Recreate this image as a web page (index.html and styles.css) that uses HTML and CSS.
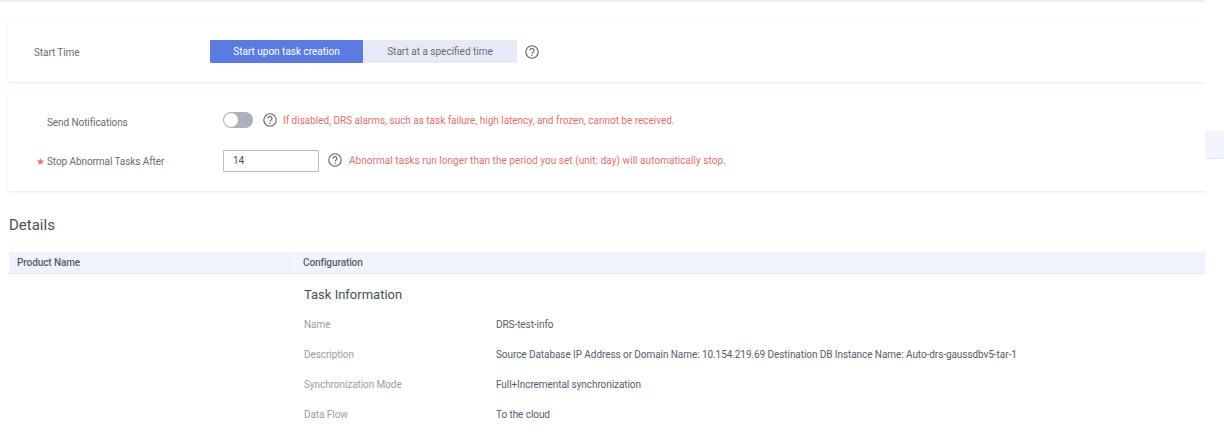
FILE: index.html
```html
<!DOCTYPE html>
<html lang="en">
<head>
<meta charset="utf-8">
<title>Confirm Task</title>
<link rel="stylesheet" href="styles.css">
</head>
<body>
<div class="page">
  <main class="main">
    <section class="card card-time">
      <div class="label label-time">Start Time</div>
      <div class="seg">
        <button class="seg-btn seg-on">Start upon task creation</button>
        <button class="seg-btn seg-off">Start at a specified time</button>
      </div>
      <svg class="help help-time" viewBox="0 0 14 14"><use href="#q"/></svg>
    </section>
    <section class="card card-notify">
      <div class="row row-send">
        <div class="label label-send">Send Notifications</div>
        <span class="switch"><span class="knob"></span></span>
        <svg class="help" viewBox="0 0 14 14"><use href="#q"/></svg>
        <span class="warn">If disabled, DRS alarms, such as task failure, high latency, and frozen, cannot be received.</span>
      </div>
      <div class="row row-stop">
        <div class="label label-stop"><span class="star">★</span>Stop Abnormal Tasks After</div>
        <div class="input">14</div>
        <svg class="help" viewBox="0 0 14 14"><use href="#q"/></svg>
        <span class="warn">Abnormal tasks run longer than the period you set (unit: day) will automatically stop.</span>
      </div>
    </section>
    <h2 class="details">Details</h2>
    <div class="thead">
      <div class="th th-name">Product Name</div>
      <div class="th th-conf">Configuration</div>
    </div>
    <div class="tbody">
      <h3 class="task">Task Information</h3>
      <dl class="info">
        <dt>Name</dt><dd>DRS-test-info</dd>
        <dt>Description</dt><dd>Source Database IP Address or Domain Name: 10.154.219.69 Destination DB Instance Name: Auto-drs-gaussdbv5-tar-1</dd>
        <dt>Synchronization Mode</dt><dd>Full+Incremental synchronization</dd>
        <dt>Data Flow</dt><dd>To the cloud</dd>
      </dl>
    </div>
  </main>
  <aside class="side"><div class="side-block"></div></aside>
</div>
<svg class="defs" width="0" height="0">
  <symbol id="q" viewBox="0 0 14 14">
    <circle cx="7" cy="7" r="6.2" fill="none" stroke="#5c5f66" stroke-width="1.1"/>
    <path d="M5 5.5a2 2 0 1 1 3.2 1.6c-.8.5-1.2.9-1.2 1.7" fill="none" stroke="#5c5f66" stroke-width="1.1"/>
    <circle cx="7" cy="10.4" r=".7" fill="#5c5f66"/>
  </symbol>
</svg>
</body>
</html>
```
FILE: styles.css
```css
* { box-sizing: border-box; }
html, body { margin: 0; height: 437px; overflow: hidden; background: #fff; }
body { font-family: Roboto, "Noto Sans", sans-serif; font-size: 10px; color: #696d75; }
.page { display: flex; height: 437px; }
.main { width: 1205px; flex: none; padding-left: 8px; border-top: 2px solid #eeeef3; overflow: hidden; }
.side { flex: 1; padding-top: 131px; }
.side-block { height: 28px; background: #f1f4fb; border-bottom: 1px solid #e3e3ea; }
.defs { position: absolute; }

.card { background: #fff; margin-right: -6px; box-shadow: 0 1px 3px rgba(0,0,0,.09), 0 0 2px rgba(0,0,0,.03); }
.card-time { margin-top: 19px; height: 61px; display: flex; align-items: center; }
.label-time { width: 202px; padding-left: 26px; padding-top: 2px; }
.seg { display: flex; }
.seg-btn { height: 23px; padding: 0; border: 0; font: inherit; border-radius: 1px; }
.seg-on { width: 153px; background: #5b7be0; color: #fff; }
.seg-off { width: 154px; background: #e6eaf8; color: #696d75; }
.help { width: 14px; height: 14px; flex: none; }
.help-time { margin-left: 8px; }

.card-notify { margin-top: 10px; height: 99px; padding-top: 17px; }
.row { display: flex; align-items: center; }
.row-send { height: 22px; }
.row-stop { height: 22px; margin-top: 19px; }
.label { letter-spacing: -.08px; }
.label-send { width: 215px; padding-left: 39px; padding-top: 5px; }
.label-stop { width: 215px; padding-left: 29px; padding-top: 1px; }
.star { color: #e2706f; display: inline-block; width: 10px; font-size: 10px; line-height: 10px; letter-spacing: 0; margin-left: -1px; margin-right: 1px; }
.switch { width: 30px; height: 16px; border-radius: 8px; background: #adb0b8; position: relative; margin-right: 10px; }
.knob { position: absolute; left: 1px; top: 1px; width: 14px; height: 14px; border-radius: 50%; background: #fff; }
.warn { color: #e2706f; margin-left: 7px; }
.row-send .warn { margin-left: 6px; letter-spacing: -.02px; }
.row-stop .warn { letter-spacing: .05px; }
.row-stop .warn, .row-stop .help { margin-bottom: 2px; }
.input { width: 96px; height: 22px; border: 1px solid #b9bcc4; border-radius: 1px; padding-left: 9px; line-height: 20px; margin-right: 9px; color: #4b4f59; }

.details { margin: 24px 0 0 1px; height: 21px; font-size: 15px; line-height: 21px; font-weight: 400; color: #4b4f59; }
.thead { display: flex; height: 22px; margin: 16px 0 0 1px; background: #f0f3fb; border-bottom: 1px solid #e5e8f2; font-weight: 500; line-height: 22px; letter-spacing: -.1px; }
.th-name { width: 285px; padding-left: 8px; color: #575d6c; }
.th-conf { padding-left: 8px; border-left: 1px solid #fff; color: #575d6c; }
.tbody { padding-left: 296px; }
.task { margin: 0; padding-top: 12px; height: 35px; font-size: 13px; line-height: 18px; font-weight: 400; color: #4b4f59; }
.info { margin: 0; display: grid; grid-template-columns: 192px 1fr; grid-auto-rows: 30px; line-height: 31px; letter-spacing: -.07px; }
.info dt { color: #9a9da5; }
.info dd { margin: 0; color: #575d6c; white-space: nowrap; }
```
